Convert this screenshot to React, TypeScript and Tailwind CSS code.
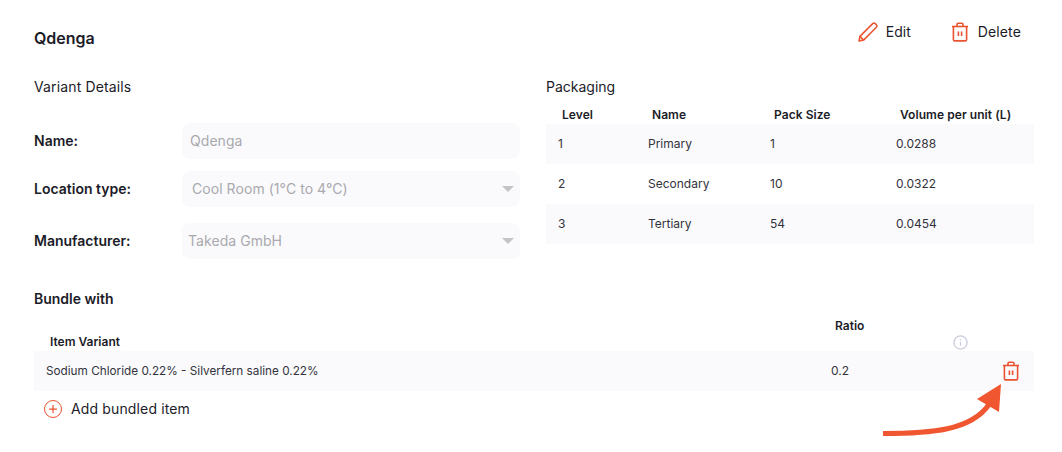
import { Plus } from 'lucide-react';

const packaging = [
  { level: '1', name: 'Primary', size: '1', volume: '0.0288' },
  { level: '2', name: 'Secondary', size: '10', volume: '0.0322' },
  { level: '3', name: 'Tertiary', size: '54', volume: '0.0454' },
];

const TrashIcon = ({ className }: { className?: string }) => (
  <svg className={className} viewBox="0 0 18 20" fill="none" stroke="#e9532f" strokeWidth="1.6" strokeLinejoin="round">
    <path d="M1 4.5h16" />
    <path d="M6 4.5V2.4c0-.6.5-1.1 1.1-1.1h3.8c.6 0 1.1.5 1.1 1.1v2.1" />
    <path d="M2.4 4.5v13c0 .8.6 1.4 1.4 1.4h10.4c.8 0 1.4-.6 1.4-1.4v-13" />
    <path d="M7.4 9.6v4.4M10.6 9.6v4.4" />
  </svg>
);

const PencilIcon = ({ className }: { className?: string }) => (
  <svg className={className} viewBox="0 0 20 20" fill="none" stroke="#e9532f" strokeWidth="1.5" strokeLinejoin="round">
    <path d="M1 19l.9-4.6L14.7 1.6c.7-.7 1.8-.7 2.5 0l1.2 1.2c.7.7.7 1.8 0 2.5L5.6 18.1 1 19z" />
    <path d="M1.9 14.4l3.7 3.7" />
  </svg>
);

const Caret = () => <div className="h-0 w-0 border-x-[6px] border-t-[6px] border-x-transparent border-t-[#c4c4c8]" />;

const Field = ({ label, value, select, pad }: { label: string; value: string; select?: boolean; pad: string }) => (
  <div className="flex items-center">
    <div className="w-[148px] text-sm font-semibold text-[#1c1c28]">{label}</div>
    <div className={`flex h-9 w-[338px] items-center justify-between rounded-lg bg-[#fafafc] pr-[6px] text-sm tracking-[0.004em] text-[#a9a9ae] ${pad}`}>
      <span>{value}</span>
      {select && <Caret />}
    </div>
  </div>
);

export default function App() {
  return (
    <div className="relative h-[452px] w-[1062px] overflow-hidden bg-white font-['Inter',sans-serif] text-[#1c1c28]">
      <div className="flex h-[76px] items-start justify-between pl-[34px] pr-[41px] pt-[22px]">
        <h1 className="mt-[4px] text-base leading-6 font-semibold">Qdenga</h1>
        <div className="flex items-center">
          <button className="flex items-center gap-[8px] text-sm">
            <PencilIcon className="h-[20px] w-[20px]" />
            Edit
          </button>
          <button className="ml-[40px] flex items-center gap-[9px] text-sm tracking-[0.01em]">
            <TrashIcon className="h-[20px] w-[18px]" />
            Delete
          </button>
        </div>
      </div>

      <div className="flex pl-[34px] pr-[28px]">
        <div className="w-[512px]">
          <div className="mt-[2px] text-sm leading-[18px] tracking-[0.01em]">Variant Details</div>
          <div className="mt-[27px] flex flex-col gap-3">
            <Field label="Name:" value="Qdenga" pad="pl-[8px]" />
            <Field label="Location type:" value="Cool Room (1°C to 4°C)" select pad="pl-[10px]" />
            <div className="mt-1">
              <Field label="Manufacturer:" value="Takeda GmbH" select pad="pl-[6px]" />
            </div>
          </div>
        </div>
        <div className="flex-1">
          <div className="mt-[2px] text-sm leading-[18px]">Packaging</div>
          <div className="mt-[9px] grid h-[19px] grid-cols-[90px_122px_126px_1fr] items-center pl-4 text-xs font-semibold tracking-[0.005em]">
            <div>Level</div>
            <div>Name</div>
            <div>Pack Size</div>
            <div>Volume per unit (L)</div>
          </div>
          {packaging.map((row, i) => (
            <div
              key={row.level}
              className={`grid h-10 grid-cols-[90px_122px_126px_1fr] items-center pl-3 text-xs text-[#33333d] ${i % 2 === 0 ? 'bg-[#fafafc]' : ''}`}
            >
              <div>{row.level}</div>
              <div>{row.name}</div>
              <div>{row.size}</div>
              <div>{row.volume}</div>
            </div>
          ))}
        </div>
      </div>

      <div className="mt-[31px] pl-[34px] pr-[28px]">
        <div className="text-sm leading-[18px] font-semibold">Bundle with</div>
        <div className="mt-[9px] grid h-[34px] grid-cols-[785px_118px_1fr] pl-4 text-xs font-semibold">
          <div className="self-end pb-[1px]">Item Variant</div>
          <div className="pt-[1px]">Ratio</div>
          <div className="self-end pb-[1px]">
            <svg className="h-[15px] w-[15px]" viewBox="0 0 16 16" fill="none" stroke="#c9cadc" strokeWidth="1.4">
              <circle cx="8" cy="8" r="7" />
              <path d="M8 7.2v4.2" />
              <path d="M8 4.4v1.3" />
            </svg>
          </div>
        </div>
        <div className="grid h-10 grid-cols-[785px_1fr_auto] items-center bg-[#fafafc] pl-3 pr-[14px] text-xs text-[#33333d]">
          <div className="pt-[2px] text-[11.75px]">Sodium Chloride 0.22% - Silverfern saline 0.22%</div>
          <div>0.2</div>
          <TrashIcon className="h-[20px] w-[18px]" />
        </div>
        <button className="mt-2 ml-[10px] flex items-center gap-[9px] text-sm tracking-[0.01em]">
          <span className="flex h-[18px] w-[18px] items-center justify-center rounded-full border-[1.6px] border-[#e9532f]">
            <Plus className="h-[12px] w-[12px] text-[#e9532f]" strokeWidth={2.5} />
          </span>
          Add bundled item
        </button>
      </div>

      {/* annotation arrow over the screenshot */}
      <svg className="absolute top-[375px] left-[875px] h-[70px] w-[135px]" viewBox="875 375 135 70" fill="none">
        <path d="M883 433.5c48 0 88-3 106-29" stroke="#f0562f" strokeWidth="5" />
        <path d="M1001 384l-24 15 22 13z" fill="#f0562f" />
      </svg>
    </div>
  );
}
